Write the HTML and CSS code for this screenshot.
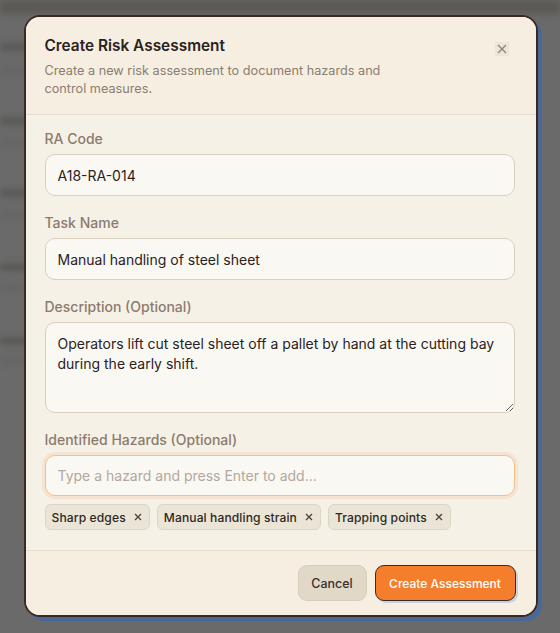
FILE: index.html
```html
<!DOCTYPE html>
<html lang="en">
<head>
    <meta charset="UTF-8">
    <meta name="viewport" content="width=device-width, initial-scale=1.0">
    <title>Create Risk Assessment</title>
    <link rel="stylesheet" href="styles.css">
</head>
<body>

    <div class="page-behind">
        <div class="bg-top"></div>
        <div class="bg-line" style="top: 44px; width: 40px;"></div>
        <div class="bg-line thin" style="top: 68px; width: 30px;"></div>
        <div class="bg-line" style="top: 118px; width: 36px;"></div>
        <div class="bg-line thin" style="top: 140px; width: 26px;"></div>
        <div class="bg-line" style="top: 190px; width: 42px;"></div>
        <div class="bg-line thin" style="top: 212px; width: 28px;"></div>
        <div class="bg-line" style="top: 264px; width: 38px;"></div>
        <div class="bg-line thin" style="top: 286px; width: 24px;"></div>
        <div class="bg-line" style="top: 338px; width: 40px;"></div>
        <div class="bg-line thin" style="top: 360px; width: 30px;"></div>
    </div>

    <div class="overlay">
        <div class="modal">
            <div class="modal-header">
                <div class="header-text">
                    <h2 class="modal-title">Create Risk Assessment</h2>
                    <p class="modal-desc">Create a new risk assessment to document hazards and<br>control measures.</p>
                </div>
                <button class="close-btn" aria-label="Close">
                    <svg width="10" height="10" viewBox="0 0 10 10">
                        <path d="M1 1 L9 9 M9 1 L1 9" stroke="#8c8278" stroke-width="1.3" fill="none"/>
                    </svg>
                </button>
            </div>

            <div class="modal-body">
                <div class="field">
                    <label class="label">RA Code</label>
                    <input class="input" type="text" value="A18-RA-014">
                </div>
                <div class="field">
                    <label class="label">Task Name</label>
                    <input class="input" type="text" value="Manual handling of steel sheet">
                </div>
                <div class="field">
                    <label class="label">Description (Optional)</label>
                    <textarea class="input textarea">Operators lift cut steel sheet off a pallet by hand at the cutting bay during the early shift.</textarea>
                </div>
                <div class="field">
                    <label class="label">Identified Hazards (Optional)</label>
                    <input class="input focused" type="text" placeholder="Type a hazard and press Enter to add...">
                    <div class="chips">
                        <span class="chip">Sharp edges
                            <svg class="chip-x" width="8" height="8" viewBox="0 0 8 8"><path d="M1 1 L7 7 M7 1 L1 7" stroke="#4d453e" stroke-width="1.4" fill="none"/></svg>
                        </span>
                        <span class="chip">Manual handling strain
                            <svg class="chip-x" width="8" height="8" viewBox="0 0 8 8"><path d="M1 1 L7 7 M7 1 L1 7" stroke="#4d453e" stroke-width="1.4" fill="none"/></svg>
                        </span>
                        <span class="chip">Trapping points
                            <svg class="chip-x" width="8" height="8" viewBox="0 0 8 8"><path d="M1 1 L7 7 M7 1 L1 7" stroke="#4d453e" stroke-width="1.4" fill="none"/></svg>
                        </span>
                    </div>
                </div>
            </div>

            <div class="modal-footer">
                <button class="btn btn-cancel">Cancel</button>
                <button class="btn btn-primary">Create Assessment</button>
            </div>
        </div>
    </div>

</body>
</html>
```

FILE: styles.css
```css
* {
    margin: 0;
    padding: 0;
    box-sizing: border-box;
    font-family: 'Inter', 'DejaVu Sans', sans-serif;
}

body {
    width: 560px;
    height: 633px;
    overflow: hidden;
    background: #6a6a6a;
    position: relative;
}

.page-behind {
    position: absolute;
    inset: 0;
    filter: blur(3px);
}

.bg-top {
    position: absolute;
    top: 0;
    left: 0;
    right: 0;
    height: 14px;
    background: #5c5a55;
}

.bg-line {
    position: absolute;
    left: 0;
    height: 6px;
    background: #555452;
}

.bg-line.thin {
    height: 4px;
    background: #626262;
}

.overlay {
    position: absolute;
    inset: 0;
    display: flex;
    align-items: center;
    justify-content: center;
    padding-left: 1px;
    padding-bottom: 1px;
}

.modal {
    width: 514px;
    background: #f6f1e6;
    border: 2px solid #3b2a22;
    border-radius: 16px;
    box-shadow: 4px 4px 0 #4a6796;
    overflow: hidden;
}

.modal-header {
    display: flex;
    justify-content: space-between;
    align-items: flex-start;
    padding: 19px 20px 16px 19px;
    background: #f6efe1;
    border-bottom: 1px solid #e6ddce;
}

.modal-title {
    font-size: 15.4px;
    font-weight: 600;
    line-height: 20px;
    color: #2a221d;
}

.modal-desc {
    margin-top: 6px;
    font-size: 12.7px;
    line-height: 18px;
    color: #8a7d72;
}

.close-btn {
    width: 14px;
    height: 14px;
    margin-top: 6px;
    margin-right: 7px;
    border: none;
    background: #ece6da;
    display: flex;
    align-items: center;
    justify-content: center;
    cursor: pointer;
}

.modal-body {
    padding: 14px 21px 20px 19px;
    display: flex;
    flex-direction: column;
    gap: 17px;
}

.field {
    display: flex;
    flex-direction: column;
}

.label {
    font-size: 14px;
    line-height: 20px;
    font-weight: 500;
    color: #8b7b6f;
    margin-bottom: 5px;
}

.input {
    width: 100%;
    height: 42px;
    padding: 0 12px;
    font-size: 14px;
    color: #2a221d;
    background: #faf8f3;
    border: 1px solid #d8cfbf;
    border-radius: 10px;
    outline: none;
}

.input::placeholder {
    color: #b2a89d;
}

.textarea {
    height: 91px;
    padding: 11px 12px;
    line-height: 20px;
    resize: vertical;
}

.input.focused {
    border-color: #f6bd8f;
    box-shadow: 0 0 0 3px #f6e4d2;
    height: 41px;
}

.chips {
    display: flex;
    flex-wrap: wrap;
    gap: 7px;
    margin-top: 8px;
}

.chip {
    display: inline-flex;
    align-items: center;
    height: 26px;
    padding: 0 7px 0 6px;
    background: #ebe5d8;
    border: 1px solid #dcd4c4;
    border-radius: 6px;
    font-size: 12.1px;
    letter-spacing: 0.1px;
    font-weight: 500;
    color: #2f2822;
}

.chip-x {
    margin-left: 8px;
}

.modal-footer {
    display: flex;
    justify-content: flex-end;
    gap: 8px;
    padding: 14px 20px 14px 20px;
    background: #f6efe1;
    border-top: 1px solid #e6ddce;
}

.btn {
    height: 36px;
    padding: 0;
    font-size: 12.5px;
    font-weight: 500;
    border-radius: 9px;
    white-space: nowrap;
    cursor: pointer;
}

.btn-cancel {
    width: 69px;
    background: #e1d9c8;
    border: 1px solid #d6cdbb;
    color: #3a3029;
}

.btn-primary {
    width: 141px;
    background: #f57e2c;
    border: 1.5px solid #3b2a22;
    color: #fff;
    font-size: 12px;
    box-shadow: 2px 2px 0 #c5d1e3;
}
```
